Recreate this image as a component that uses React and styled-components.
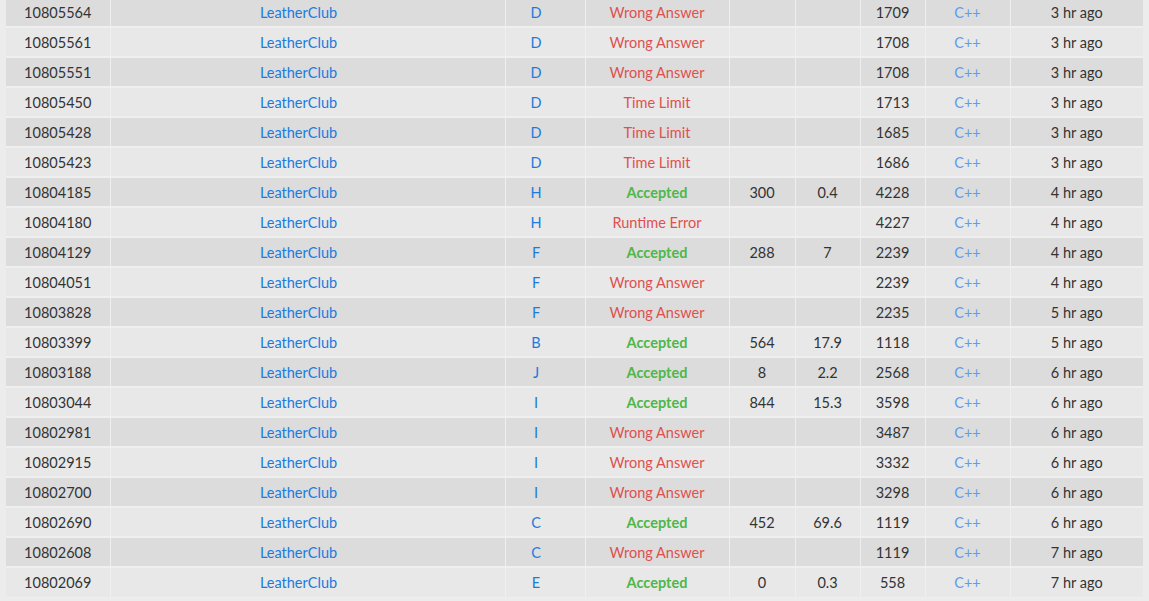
import React from 'react'
import styled, { createGlobalStyle } from 'styled-components'

const Global = createGlobalStyle`
  html, body {
    margin: 0;
    padding: 0;
    background: #ececec;
    overflow: hidden;
  }
`

const Page = styled.div`
  height: 601px;
  overflow: hidden;
  padding: 0 6px;
  font-family: Lato, "Open Sans", sans-serif;
  font-size: 14.5px;
  color: #333;
`

const Table = styled.table`
  width: 1137px;
  margin-top: -4px;
  border-collapse: collapse;
  table-layout: fixed;
`

const Row = styled.tr`
  background: ${p => (p.$odd ? '#dcdcdc' : '#e8e8e8')};
  height: 30px;
`

const Cell = styled.td`
  border: 1px solid #efefef;
  border-top-width: 2px;
  padding: 0 ${p => p.$shift || 0}px 0 0;
  text-align: center;
  vertical-align: middle;
  white-space: nowrap;
  color: ${p => p.$color || '#333'};
  font-weight: ${p => (p.$bold ? 700 : 400)};
  &:first-child { border-left: none; }
  &:last-child { border-right: none; }
`

const widths = [104, 395, 80, 144, 66, 65, 65, 85, 133]

const rows = [
  ['10805564', 'D', 'WA', '', '', '1709', '3'],
  ['10805561', 'D', 'WA', '', '', '1708', '3'],
  ['10805551', 'D', 'WA', '', '', '1708', '3'],
  ['10805450', 'D', 'TL', '', '', '1713', '3'],
  ['10805428', 'D', 'TL', '', '', '1685', '3'],
  ['10805423', 'D', 'TL', '', '', '1686', '3'],
  ['10804185', 'H', 'AC', '300', '0.4', '4228', '4'],
  ['10804180', 'H', 'RE', '', '', '4227', '4'],
  ['10804129', 'F', 'AC', '288', '7', '2239', '4'],
  ['10804051', 'F', 'WA', '', '', '2239', '4'],
  ['10803828', 'F', 'WA', '', '', '2235', '5'],
  ['10803399', 'B', 'AC', '564', '17.9', '1118', '5'],
  ['10803188', 'J', 'AC', '8', '2.2', '2568', '6'],
  ['10803044', 'I', 'AC', '844', '15.3', '3598', '6'],
  ['10802981', 'I', 'WA', '', '', '3487', '6'],
  ['10802915', 'I', 'WA', '', '', '3332', '6'],
  ['10802700', 'I', 'WA', '', '', '3298', '6'],
  ['10802690', 'C', 'AC', '452', '69.6', '1119', '6'],
  ['10802608', 'C', 'WA', '', '', '1119', '7'],
  ['10802069', 'E', 'AC', '0', '0.3', '558', '7'],
]

const verdicts = {
  WA: { text: 'Wrong Answer', color: '#e0504f' },
  TL: { text: 'Time Limit', color: '#e0504f' },
  RE: { text: 'Runtime Error', color: '#e0504f' },
  AC: { text: 'Accepted', color: '#4fb748', bold: true },
}

export default function App() {
  return (
    <Page>
      <Global />
      <Table>
        <colgroup>
          {widths.map((w, i) => <col key={i} style={{ width: w }} />)}
        </colgroup>
        <tbody>
          {rows.map((r, i) => {
            const v = verdicts[r[2]]
            return (
              <Row key={r[0]} $odd={i % 2 === 0}>
                <Cell>{r[0]}</Cell>
                <Cell $color="#1a7bdc" $shift={18}>LeatherClub</Cell>
                <Cell $color="#1a7bdc" $shift={18}>{r[1]}</Cell>
                <Cell $color={v.color} $bold={v.bold}>{v.text}</Cell>
                <Cell>{r[3]}</Cell>
                <Cell>{r[4]}</Cell>
                <Cell>{r[5]}</Cell>
                <Cell $color="#5d9cef">C++</Cell>
                <Cell>{r[6]} hr ago</Cell>
              </Row>
            )
          })}
        </tbody>
      </Table>
    </Page>
  )
}
